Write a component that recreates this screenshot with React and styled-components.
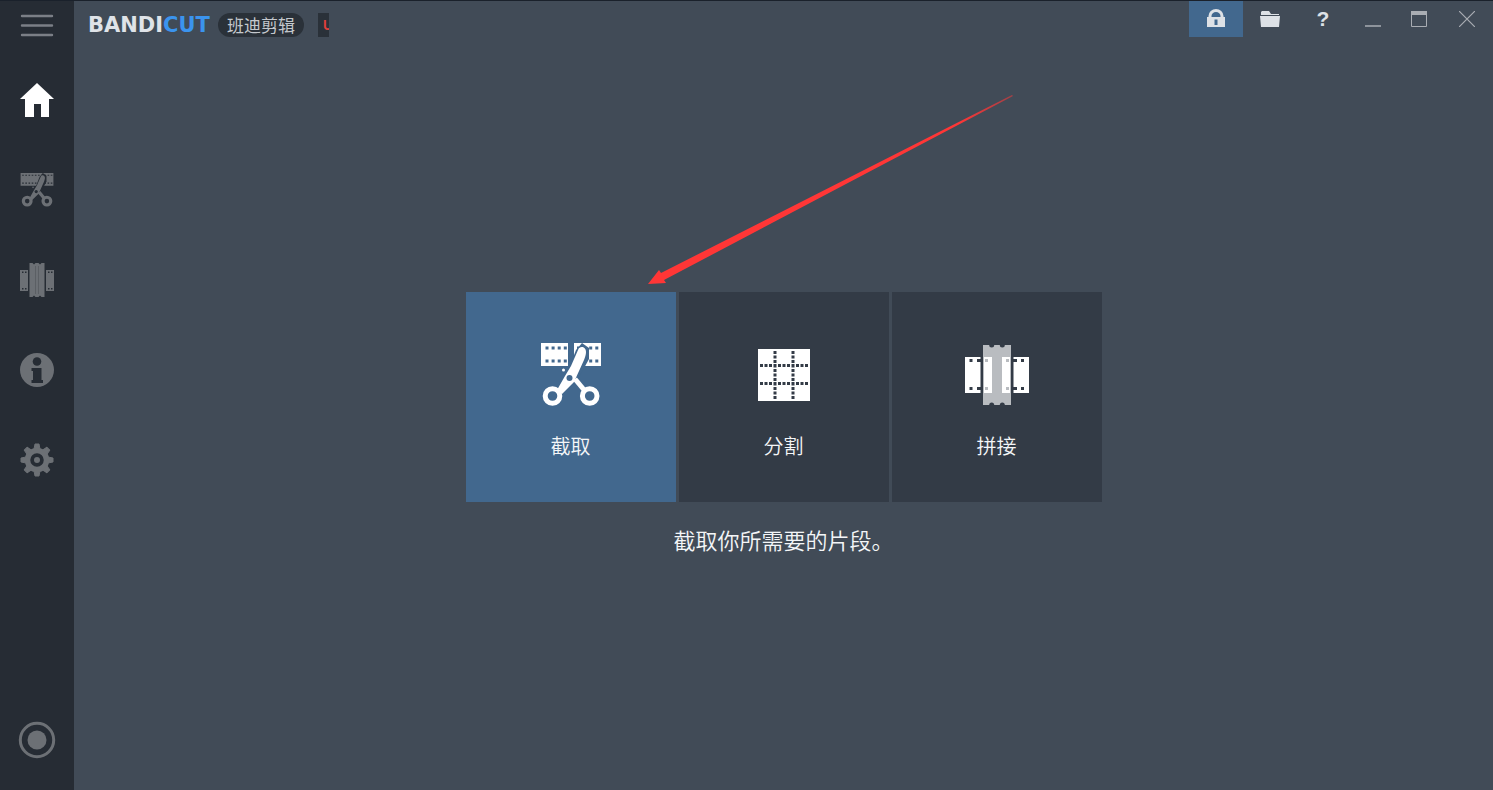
import React from 'react'
import styled, { ThemeProvider, createGlobalStyle, css } from 'styled-components'

const theme = {
    colors: {
        background: '#414b57',
        sidebar: '#262c34',
        tile: '#333b46',
        accent: '#42688e',
        pill: '#2a3139',
        edge: '#1a212b',
        muted: '#6c7075',
        control: '#a9adb3',
        brand: '#dfe3e8',
        brandAccent: '#3b94ee',
        red: '#ff3636',
        text: '#f4f6f8'
    }
}

const GlobalStyles = createGlobalStyle`
    * {
        box-sizing: border-box;
        padding: 0;
        margin: 0;
    }
    body {
        background: ${props => props.theme.colors.background};
        color: ${props => props.theme.colors.text};
        font-family: "Noto Sans CJK SC", sans-serif;
    }
`

const plainButton = css`
    display: flex;
    align-items: center;
    justify-content: center;
    border: none;
    background: transparent;
    font-family: inherit;
    cursor: pointer;
`

const Window = styled.div`
    display: flex;
    min-height: 100vh;
    overflow: hidden;
    border-top: 1px solid ${props => props.theme.colors.edge};
`

const Sidebar = styled.nav`
    display: flex;
    flex-direction: column;
    flex: none;
    width: 74px;
    background: ${props => props.theme.colors.sidebar};
`

const MenuButton = styled.button`
    ${plainButton}
    height: 48px;
    margin-bottom: 6px;
    color: #7b7f86;
`

const SideButton = styled.button`
    ${plainButton}
    height: 90px;
    color: ${props => props.$active ? '#ffffff' : props.theme.colors.muted};
`

const RecordButton = styled(SideButton)`
    height: 100px;
    margin-top: auto;
`

const Page = styled.div`
    display: flex;
    flex-direction: column;
    flex: 1;
    min-width: 0;
`

const TitleBar = styled.header`
    display: flex;
    justify-content: space-between;
    align-items: flex-start;
    height: 56px;
`

const Branding = styled.div`
    display: flex;
    align-items: center;
    height: 48px;
    padding-left: 14px;
`

const Logo = styled.h1`
    width: 130px;
    font-family: "DejaVu Sans", sans-serif;
    font-size: 21px;
    font-weight: 700;
    line-height: 24px;
    color: ${props => props.theme.colors.brand};
    span {
        color: ${props => props.theme.colors.brandAccent};
    }
`

const Pill = styled.span`
    padding: 0 9px;
    border-radius: 12px;
    background: ${props => props.theme.colors.pill};
    color: #c4c8cd;
    font-size: 17px;
    line-height: 24px;
`

const Badge = styled.span`
    width: 11px;
    height: 24px;
    margin-left: 14px;
    padding-left: 5px;
    overflow: hidden;
    background: ${props => props.theme.colors.pill};
    color: #dd3f3c;
    font-family: Inter, sans-serif;
    font-size: 13px;
    font-weight: 700;
    line-height: 24px;
`

const Controls = styled.div`
    display: flex;
`

const ControlButton = styled.button`
    ${plainButton}
    width: ${props => props.$width}px;
    height: 36px;
    background: ${props => props.$active ? props.theme.colors.accent : 'transparent'};
    color: ${props => props.$bright ? '#dde1e6' : props.theme.colors.control};
    font-family: "Liberation Sans", sans-serif;
    font-size: 21px;
    font-weight: 700;
`

const Content = styled.main`
    display: flex;
    flex-direction: column;
    flex: 1;
    align-items: center;
    justify-content: center;
    gap: 20px;
`

const Tiles = styled.div`
    position: relative;
    display: flex;
    gap: 3px;
`

const Tile = styled.button`
    ${plainButton}
    flex-direction: column;
    gap: 24px;
    width: 210px;
    height: 210px;
    padding-top: 6px;
    background: ${props => props.$active ? props.theme.colors.accent : props.theme.colors.tile};
    color: ${props => props.theme.colors.text};
    font-size: 20px;
    font-weight: 350;
    line-height: 26px;
`

const TileIcon = styled.span`
    display: flex;
    align-items: center;
    height: 68px;
    color: #ffffff;
`

const Description = styled.p`
    font-size: 22px;
    font-weight: 350;
    line-height: 34px;
`

// pointer drawn over the page, its tip touches the first tile
const Pointer = styled.svg`
    position: absolute;
    left: 180px;
    bottom: calc(100% + 6px);
    pointer-events: none;
`

const MenuIcon = () => (
    <svg width="34" height="24" viewBox="0 0 34 24" stroke="currentColor" strokeWidth="2.4" strokeLinecap="round">
        <path d="M2 3h30M2 12.500h30M2 22h30" />
    </svg>
)

const HomeIcon = () => (
    <svg width="34" height="34" viewBox="0 0 34 34" fill="currentColor">
        <path d="M17 0 34 16h-5v18h-8V21h-7v13H5V16H0z" />
    </svg>
)

const ScissorsIcon = ({ width, height, cut, joined }) => (
    <svg width={width} height={height} viewBox="0 0 64 68" fill="none">
        <path fill="currentColor" d={joined ? 'M1 2h62v24H1z' : 'M2 2h27v23H2zM35 2h27v23H35z'} />
        <path
            stroke={cut}
            strokeWidth={joined ? 2 : 3}
            strokeDasharray={joined ? '3 3' : '3 3.1'}
            d={joined ? 'M4 6h58M4 21h58' : 'M6.500 7h22M6.500 20h22M38 7h22M38 20h22'}
        />
        <path fill={cut} d="M30 27 37 9l6-7 7 5v11L38 40z" />
        <path fill="currentColor" d="M32 25 39 9c2-5 8-3 8 2 0 3-1 5-2 8L35 41 23 53l-5-4 8-14z" />
        <path stroke="currentColor" strokeWidth={joined ? 6 : 5} d="M36 38 46 50" />
        <circle cx="13.500" cy="55" r="7.300" stroke="currentColor" strokeWidth={joined ? 6 : 5} />
        <circle cx="50.700" cy="55" r="7.300" stroke="currentColor" strokeWidth={joined ? 6 : 5} />
        <circle cx="30.500" cy="37" r="3" fill={cut} />
        <circle cx="24.500" cy="29" r="1.500" fill="currentColor" />
    </svg>
)

const GridIcon = () => (
    <svg width="52" height="52" viewBox="0 0 52 52">
        <path fill="currentColor" d="M0 0h52v52H0z" />
        <path
            stroke={theme.colors.tile}
            strokeWidth="3"
            strokeDasharray="3 1.5"
            d="M17 2v48.500M35 2v48.500M2 16.500h48.500M2 34.500h48.500"
        />
    </svg>
)

const JoinIcon = () => (
    <svg width="64" height="60" viewBox="0 0 64 60">
        <path fill="currentColor" d="M0 12h15.500v36H0zM48.500 12H64v36H48.500z" />
        <path fill="#b9bcc0" d="M18 0h28v60H18z" />
        <path fill="currentColor" d="M19 12h8v36h-8zM37 12h8v36h-8z" />
        <path fill={theme.colors.tile} d="M4.500 14h3v3h-3zM12 14h4v3h-4zM4.500 42h3v3h-3zM12 42h4v3h-4zM48 14h4v3h-4zM56 14h3v3h-3zM48 42h4v3h-4zM56 42h3v3h-3z" />
        <path fill="#b9bcc0" d="M20 14h3v3h-3zM41 14h3v3h-3zM20 42h3v3h-3zM41 42h3v3h-3z" />
        {/* sprocket notches of the middle strip */}
        <g fill={theme.colors.tile}>
            <circle cx="26.700" cy="0" r="2.500" />
            <circle cx="37.300" cy="0" r="2.500" />
            <circle cx="26.700" cy="60" r="2.500" />
            <circle cx="37.300" cy="60" r="2.500" />
        </g>
    </svg>
)

const JoinSmallIcon = () => (
    <svg width="34" height="34" viewBox="0 0 34 34">
        <path fill="currentColor" d="M0 7h8v21H0zM26 7h8v21h-8z" />
        <path fill="currentColor" d="M9.500 0h3l1.500 1.500L15.500 0h3L20 1.500 21.500 0h3v34h-3L20 32.500 18.500 34h-3L14 32.500 12.500 34h-3z" />
        <path fill={theme.colors.sidebar} d="M2 8.500h1.500V10H2zM5 8.500h1.500V10H5zM2 25h1.500v1.500H2zM5 25h1.500v1.500H5zM28 8.500h1.500V10H28zM31 8.500h1.500V10H31zM28 25h1.500v1.500H28zM31 25h1.500v1.500H31z" />
        <path stroke={theme.colors.sidebar} strokeOpacity=".25" d="M15.500 3v28M18.500 3v28" />
    </svg>
)

const InfoIcon = () => (
    <svg width="34" height="34" viewBox="0 0 34 34">
        <circle cx="17" cy="17" r="17" fill="currentColor" />
        <circle cx="17" cy="8.500" r="4.300" fill={theme.colors.sidebar} />
        <path fill={theme.colors.sidebar} d="M11.500 15H21.500v12H23v3H11.500v-3H13v-9h-1.500z" />
    </svg>
)

const GearIcon = () => (
    <svg width="34" height="34" viewBox="0 0 34 34">
        <circle cx="17" cy="17" r="9.500" fill="none" stroke="currentColor" strokeWidth="5.500" />
        <circle cx="17" cy="17" r="3" fill="currentColor" />
        {[0, 45, 90, 135, 180, 225, 270, 315].map(angle => (
            <path
                key={angle}
                fill="currentColor"
                stroke="currentColor"
                strokeLinejoin="round"
                d="M15 1h4l1 5h-6z"
                transform={`rotate(${angle} 17 17)`}
            />
        ))}
    </svg>
)

const RecordIcon = () => (
    <svg width="38" height="38" viewBox="0 0 38 38">
        <circle cx="19" cy="19" r="16.700" fill="none" stroke="currentColor" strokeWidth="3" />
        <circle cx="19" cy="19" r="9.500" fill="currentColor" />
    </svg>
)

const LockIcon = () => (
    <svg width="20" height="20" viewBox="0 0 20 20">
        <path fill="none" stroke="currentColor" strokeWidth="3" d="M4 9V7a6 5.500 0 0 1 12 0v2" />
        <path fill="currentColor" d="M1 8h18v10H1z" />
        <path fill={theme.colors.accent} d="M8.500 10.500h3V16h-3z" />
    </svg>
)

const FolderIcon = () => (
    <svg width="20" height="16" viewBox="0 0 20 16" fill="currentColor">
        <path d="M1 3V1l1-1h7l2 3h8v1H1zM0 5h20l-1 11H1z" />
    </svg>
)

const MinimizeIcon = () => (
    <svg width="16" height="16" viewBox="0 0 16 16" stroke="currentColor" strokeWidth="1.500">
        <path d="M0 15h16" />
    </svg>
)

const MaximizeIcon = () => (
    <svg width="16" height="16" viewBox="0 0 16 16">
        <path fill="none" stroke="currentColor" d="M.5.5h15v15H.5z" />
        <path fill="currentColor" d="M0 0h16v4H0z" />
    </svg>
)

const CloseIcon = () => (
    <svg width="16" height="16" viewBox="0 0 16 16" stroke="currentColor" strokeWidth="1.200">
        <path d="M0 0 16 16M16 0 0 16" />
    </svg>
)

const App = () => (
    <ThemeProvider theme={theme}>
        <GlobalStyles />
        <Window>
            <Sidebar>
                <MenuButton aria-label="菜单"><MenuIcon /></MenuButton>
                <SideButton $active aria-label="主页"><HomeIcon /></SideButton>
                <SideButton aria-label="截取">
                    <ScissorsIcon width={34} height={36} cut={theme.colors.sidebar} joined />
                </SideButton>
                <SideButton aria-label="拼接"><JoinSmallIcon /></SideButton>
                <SideButton aria-label="信息"><InfoIcon /></SideButton>
                <SideButton aria-label="设置"><GearIcon /></SideButton>
                <RecordButton aria-label="录制"><RecordIcon /></RecordButton>
            </Sidebar>
            <Page>
                <TitleBar>
                    <Branding>
                        <Logo>BANDI<span>CUT</span></Logo>
                        <Pill>班迪剪辑</Pill>
                        <Badge>U</Badge>
                    </Branding>
                    <Controls>
                        <ControlButton $width={54} $active $bright aria-label="注册"><LockIcon /></ControlButton>
                        <ControlButton $width={54} $bright aria-label="打开文件夹"><FolderIcon /></ControlButton>
                        <ControlButton $width={52} $bright>?</ControlButton>
                        <ControlButton $width={48} aria-label="最小化"><MinimizeIcon /></ControlButton>
                        <ControlButton $width={44} aria-label="最大化"><MaximizeIcon /></ControlButton>
                        <ControlButton $width={52} aria-label="关闭"><CloseIcon /></ControlButton>
                    </Controls>
                </TitleBar>
                <Content>
                    <Tiles>
                        <Tile $active>
                            <TileIcon><ScissorsIcon width={64} height={68} cut={theme.colors.accent} /></TileIcon>
                            截取
                        </Tile>
                        <Tile>
                            <TileIcon><GridIcon /></TileIcon>
                            分割
                        </Tile>
                        <Tile>
                            <TileIcon><JoinIcon /></TileIcon>
                            拼接
                        </Tile>
                        <Pointer width="370" height="192" viewBox="0 0 370 192">
                            <defs>
                                <linearGradient id="fade" x1="0" x2="1">
                                    <stop offset=".85" stopColor={theme.colors.red} />
                                    <stop offset="1" stopColor={theme.colors.red} stopOpacity=".5" />
                                </linearGradient>
                            </defs>
                            <path fill="url(#fade)" d="M2 190 13 176l2 3L366 1l1 1L18 186l2 3z" />
                        </Pointer>
                    </Tiles>
                    <Description>截取你所需要的片段。</Description>
                </Content>
            </Page>
        </Window>
    </ThemeProvider>
)

export default App
